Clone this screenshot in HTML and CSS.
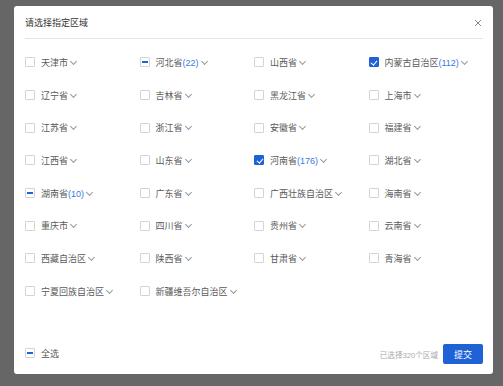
FILE: index.html
```html
<!DOCTYPE html>
<html lang="zh-CN">
<head>
    <meta charset="UTF-8">
    <title>请选择指定区域</title>
    <link rel="stylesheet" href="styles.css">
</head>
<body>
    <div class="dialog">
        <div class="dialog-header">
            <span class="dialog-title">请选择指定区域</span>
            <svg class="close" width="8" height="8" viewBox="0 0 8 8"><path d="M1 1L7 7M7 1L1 7" stroke="#888" stroke-width="1" fill="none"/></svg>
        </div>
        <div class="region-grid">
            <label class="region"><span class="box"></span><span class="name">天津市</span><i class="arrow"></i></label>
            <label class="region"><span class="box half"></span><span class="name">河北省<em>(22)</em></span><i class="arrow"></i></label>
            <label class="region"><span class="box"></span><span class="name">山西省</span><i class="arrow"></i></label>
            <label class="region"><span class="box on"></span><span class="name">内蒙古自治区<em>(112)</em></span><i class="arrow"></i></label>

            <label class="region"><span class="box"></span><span class="name">辽宁省</span><i class="arrow"></i></label>
            <label class="region"><span class="box"></span><span class="name">吉林省</span><i class="arrow"></i></label>
            <label class="region"><span class="box"></span><span class="name">黑龙江省</span><i class="arrow"></i></label>
            <label class="region"><span class="box"></span><span class="name">上海市</span><i class="arrow"></i></label>

            <label class="region"><span class="box"></span><span class="name">江苏省</span><i class="arrow"></i></label>
            <label class="region"><span class="box"></span><span class="name">浙江省</span><i class="arrow"></i></label>
            <label class="region"><span class="box"></span><span class="name">安徽省</span><i class="arrow"></i></label>
            <label class="region"><span class="box"></span><span class="name">福建省</span><i class="arrow"></i></label>

            <label class="region"><span class="box"></span><span class="name">江西省</span><i class="arrow"></i></label>
            <label class="region"><span class="box"></span><span class="name">山东省</span><i class="arrow"></i></label>
            <label class="region"><span class="box on"></span><span class="name">河南省<em>(176)</em></span><i class="arrow"></i></label>
            <label class="region"><span class="box"></span><span class="name">湖北省</span><i class="arrow"></i></label>

            <label class="region"><span class="box half"></span><span class="name">湖南省<em>(10)</em></span><i class="arrow"></i></label>
            <label class="region"><span class="box"></span><span class="name">广东省</span><i class="arrow"></i></label>
            <label class="region"><span class="box"></span><span class="name">广西壮族自治区</span><i class="arrow"></i></label>
            <label class="region"><span class="box"></span><span class="name">海南省</span><i class="arrow"></i></label>

            <label class="region"><span class="box"></span><span class="name">重庆市</span><i class="arrow"></i></label>
            <label class="region"><span class="box"></span><span class="name">四川省</span><i class="arrow"></i></label>
            <label class="region"><span class="box"></span><span class="name">贵州省</span><i class="arrow"></i></label>
            <label class="region"><span class="box"></span><span class="name">云南省</span><i class="arrow"></i></label>

            <label class="region"><span class="box"></span><span class="name">西藏自治区</span><i class="arrow"></i></label>
            <label class="region"><span class="box"></span><span class="name">陕西省</span><i class="arrow"></i></label>
            <label class="region"><span class="box"></span><span class="name">甘肃省</span><i class="arrow"></i></label>
            <label class="region"><span class="box"></span><span class="name">青海省</span><i class="arrow"></i></label>

            <label class="region"><span class="box"></span><span class="name">宁夏回族自治区</span><i class="arrow"></i></label>
            <label class="region"><span class="box"></span><span class="name">新疆维吾尔自治区</span><i class="arrow"></i></label>
        </div>
        <div class="dialog-footer">
            <label class="region"><span class="box half"></span><span class="name">全选</span></label>
            <div class="footer-right">
                <span class="summary">已选择320个区域</span>
                <button class="submit">提交</button>
            </div>
        </div>
    </div>
</body>
</html>
```

FILE: styles.css
```css
/* 基本布局 */
body {
    margin: 0;
    padding: 6px 10px 12px 14px;
    background-color: #666;
    font-family: "Liberation Sans", "Noto Sans CJK SC", sans-serif;
    height: 100vh;
    box-sizing: border-box;
}
.dialog {
    background-color: #fff;
    border-radius: 3px;
    height: 100%;
    display: flex;
    flex-direction: column;
    padding: 0 10px 10px 11px;
    box-sizing: border-box;
}
/* 标题栏 */
.dialog-header {
    display: flex;
    align-items: center;
    justify-content: space-between;
    height: 31px;
    padding-top: 1px;
    border-bottom: 1px solid #e3e3e3;
}
.dialog-title {
    font-size: 9px;
    color: #333;
}
.close {
    margin-right: 1px;
}
/* 区域列表 */
.region-grid {
    flex: 1;
    display: grid;
    grid-template-columns: repeat(4, 1fr);
    grid-auto-rows: 32.7px;
    align-items: center;
    margin-top: 7px;
    align-content: start;
}
.region {
    display: flex;
    align-items: center;
    font-size: 9px;
    color: #5a5a5a;
    white-space: nowrap;
}
.name em {
    font-style: normal;
    color: #3a78e0;
}
.box {
    width: 10px;
    height: 10px;
    box-sizing: border-box;
    border: 1px solid #d4d4d4;
    border-radius: 1px;
    margin-right: 6px;
    position: relative;
    flex: none;
}
.box.on {
    background-color: #1f62d6;
    border-color: #1f62d6;
}
.box.on::after {
    content: "";
    position: absolute;
    left: 2.5px;
    top: 0.5px;
    width: 2.5px;
    height: 5px;
    border: solid #fff;
    border-width: 0 1.3px 1.3px 0;
    transform: rotate(40deg);
}
.box.half::after {
    content: "";
    position: absolute;
    left: 1px;
    top: 3px;
    width: 6px;
    height: 2px;
    background-color: #1f62d6;
}
.arrow {
    width: 4px;
    height: 4px;
    border: solid #999;
    border-width: 0 1px 1px 0;
    transform: rotate(45deg);
    margin: -2px 0 0 3px;
}
/* 底部 */
.dialog-footer {
    display: flex;
    align-items: center;
    justify-content: space-between;
    margin-top: -2px;
}
.footer-right {
    display: flex;
    align-items: center;
    gap: 5px;
    margin-top: 2px;
}
.summary {
    font-size: 7.6px;
    color: #aaa;
}
.submit {
    width: 40px;
    height: 20px;
    border: none;
    border-radius: 2px;
    background-color: #1f62d6;
    color: #fff;
    font-size: 9px;
    font-family: inherit;
    padding: 0;
}
```
